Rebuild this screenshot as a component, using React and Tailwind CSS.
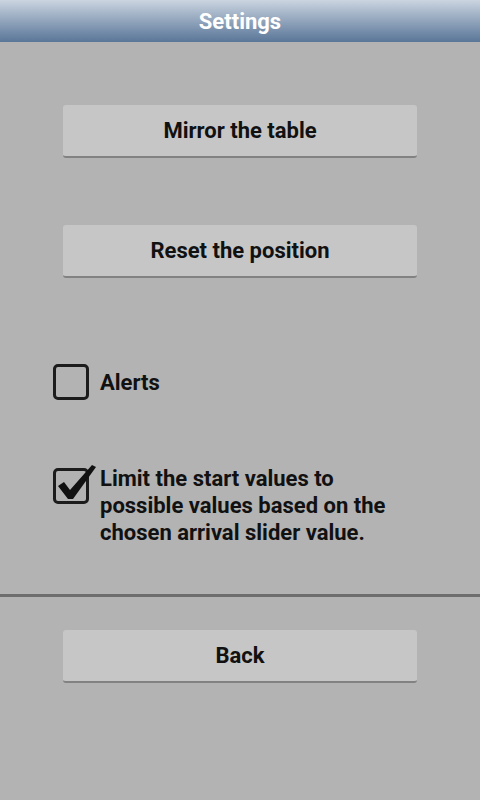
import React, { useState } from 'react';

function SettingsButton({ label, className = '' }) {
  return (
    <button
      className={`mx-[63px] h-[53px] rounded-[3px] border-b-2 border-[#828282] bg-[#c6c6c6] text-[22px] font-bold text-[#111] ${className}`}
    >
      {label}
    </button>
  );
}

function CheckBox({ checked }) {
  return (
    <div className="relative h-[36px] w-[36px] shrink-0 rounded-[5px] border-[3px] border-[#1c1c1c]">
      {checked && (
        <svg
          className="absolute left-[-3px] top-[-3px] overflow-visible"
          width="36"
          height="36"
          viewBox="0 0 36 36"
        >
          <polygon
            points="5,18 11,14 17,22 39,-3 43,-1 20,31 15,31"
            fill="#111"
          />
        </svg>
      )}
    </div>
  );
}

export default function App() {
  const [alerts, setAlerts] = useState(false);
  const [limit, setLimit] = useState(true);

  return (
    <div
      className="flex min-h-[800px] flex-col bg-[#b3b3b3]"
      style={{ fontFamily: 'Roboto, "Liberation Sans", sans-serif' }}
    >
      {/* Title bar */}
      <div className="flex h-[42px] items-center justify-center bg-gradient-to-b from-[#cbd5e0] to-[#5a7698] text-[22px] font-bold text-white">
        Settings
      </div>

      <SettingsButton label="Mirror the table" className="mt-[63px]" />
      <SettingsButton label="Reset the position" className="mt-[67px]" />

      <div
        className="ml-[53px] mt-[86px] flex items-center gap-[11px] text-[22px] font-bold leading-[27px] text-[#111]"
        onClick={() => setAlerts(!alerts)}
      >
        <CheckBox checked={alerts} />
        <span>Alerts</span>
      </div>

      <div
        className="ml-[53px] mt-[65px] flex items-start gap-[11px] text-[22px] font-bold leading-[27px] text-[#111]"
        onClick={() => setLimit(!limit)}
      >
        <div className="mt-[3px]">
          <CheckBox checked={limit} />
        </div>
        <span className="w-[320px]">
          Limit the start values to possible values based on the chosen arrival slider value.
        </span>
      </div>

      <div className="mt-[48px] h-[3px] bg-[#6e6e6e]" />

      <SettingsButton label="Back" className="mt-[33px]" />
    </div>
  );
}
